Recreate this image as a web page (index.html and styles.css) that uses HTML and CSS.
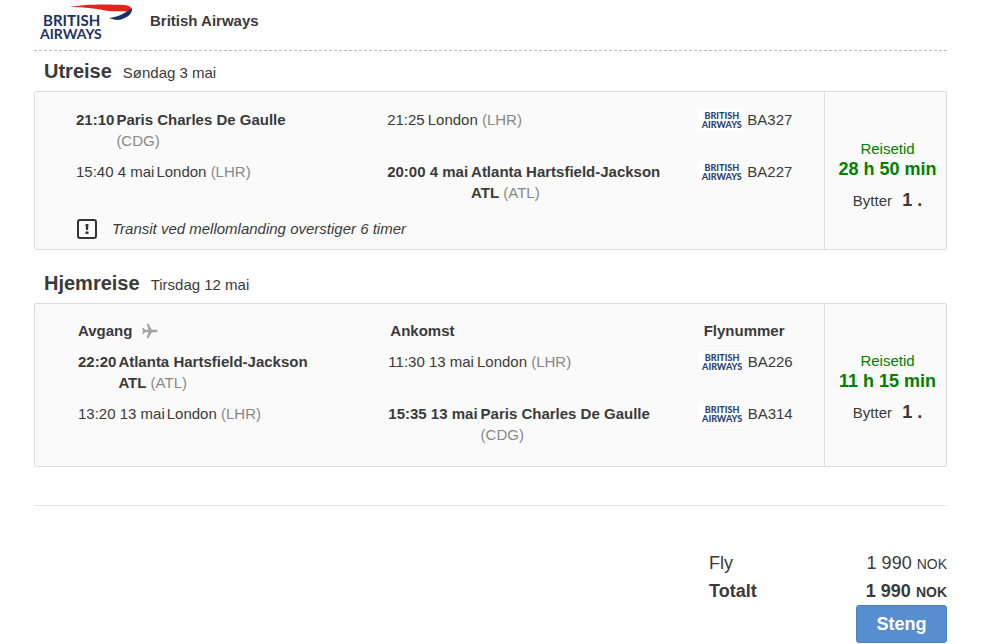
FILE: index.html
```html
<!DOCTYPE html>
<html lang="no">
	<head>
		<meta charset="UTF-8">
		<title>British Airways</title>
		<link rel="stylesheet" href="styles.css">
	</head>
	<body>
		<div class="page">
			<div class="airline">
				<svg class="logo" viewBox="0 0 96 40" role="img" aria-label="British Airways">
					<path d="M31 6 C46 3 70 3 86 4 C93 4 95 8 92 12 C87 9 79 11 70 10 C60 8 47 6 31 6z" fill="#e1251b"/>
					<path d="M71 17 C80 16 88 12 94 7 C95 13 88 18 80 19 C77 19 74 18 71 17z" fill="#1d3263"/>
					<text x="5" y="25" class="british">BRITISH</text>
					<text x="2" y="38">AIRWAYS</text>
				</svg>
				<b>British Airways</b>
			</div>

			<div class="title"><h2>Utreise</h2><span>Søndag 3 mai</span></div>
			<div class="card">
				<div class="flights">
					<table>
						<tr>
							<td><div class="stop"><b>21:10</b><span><b>Paris Charles De Gaulle</b> <i>(CDG)</i></span></div></td>
							<td><div class="stop to"><span>21:25</span><span>London <i>(LHR)</i></span></div></td>
							<td><div class="number"><div class="ba"><span>BRITISH</span><span>AIRWAYS</span></div>BA327</div></td>
						</tr>
						<tr>
							<td><div class="stop"><span>15:40 4 mai</span><span>London <i>(LHR)</i></span></div></td>
							<td><div class="stop to"><b>20:00 4 mai</b><span><b>Atlanta Hartsfield-Jackson ATL</b> <i>(ATL)</i></span></div></td>
							<td><div class="number"><div class="ba"><span>BRITISH</span><span>AIRWAYS</span></div>BA227</div></td>
						</tr>
					</table>
					<div class="note">
						<svg viewBox="0 0 20 20"><rect x="1" y="1" width="18" height="18" rx="2" fill="none" stroke="#333" stroke-width="2"/><path d="M8.500 5h3l-.5 6h-2zM8.500 12.500h3v2.500h-3z" fill="#333"/></svg>
						<em>Transit ved mellomlanding overstiger 6 timer</em>
					</div>
				</div>
				<div class="time">
					<span class="green">Reisetid</span>
					<strong class="green">28 h 50 min</strong>
					<div class="change">Bytter <strong>1 .</strong></div>
				</div>
			</div>

			<div class="title"><h2>Hjemreise</h2><span>Tirsdag 12 mai</span></div>
			<div class="card back">
				<div class="flights">
					<table>
						<tr>
							<th>Avgang <svg class="plane" viewBox="0 0 16 16"><path d="M15.500 8 C15.500 7.200 14.500 6.700 13.500 6.700 L9.800 6.700 L6.500 .8 L4.700 .8 L6.500 6.700 L3 6.700 L1.600 5 L.3 5 L1 8 L.3 11 L1.600 11 L3 9.300 L6.500 9.300 L4.700 15.200 L6.500 15.200 L9.800 9.300 L13.500 9.300 C14.500 9.300 15.500 8.800 15.500 8z" fill="#a3a3a3"/></svg></th>
							<th>Ankomst</th>
							<th>Flynummer</th>
						</tr>
						<tr>
							<td><div class="stop"><b>22:20</b><span><b>Atlanta Hartsfield-Jackson ATL</b> <i>(ATL)</i></span></div></td>
							<td><div class="stop to"><span>11:30 13 mai</span><span>London <i>(LHR)</i></span></div></td>
							<td><div class="number"><div class="ba"><span>BRITISH</span><span>AIRWAYS</span></div>BA226</div></td>
						</tr>
						<tr>
							<td><div class="stop"><span>13:20 13 mai</span><span>London <i>(LHR)</i></span></div></td>
							<td><div class="stop to"><b>15:35 13 mai</b><span><b>Paris Charles De Gaulle</b> <i>(CDG)</i></span></div></td>
							<td><div class="number"><div class="ba"><span>BRITISH</span><span>AIRWAYS</span></div>BA314</div></td>
						</tr>
					</table>
				</div>
				<div class="time">
					<span class="green">Reisetid</span>
					<strong class="green">11 h 15 min</strong>
					<div class="change">Bytter <strong>1 .</strong></div>
				</div>
			</div>

			<div class="price">
				<table>
					<tr><td>Fly</td><td>1 990 <small>NOK</small></td></tr>
					<tr class="total"><td>Totalt</td><td>1 990 <small>NOK</small></td></tr>
				</table>
				<button type="button">Steng</button>
			</div>
		</div>
	</body>
</html>
```

FILE: styles.css
```css
*{margin: 0;padding: 0;box-sizing: border-box;}
body{font: 15px/21px "Liberation Sans", Arial, sans-serif;color: #3a3a3a;background: #fff;}
table{border-collapse: collapse;width: 100%;}
.page{margin: 0 58px 0 34px;}

.airline{display: flex;align-items: center;height: 51px;padding: 0 0 9px 4px;border-bottom: 1px dashed #bbb;}
.logo{width: 96px;height: 40px;margin-right: 16px;}
.logo text{font: bold 14px Lato, sans-serif;fill: #1d3263;}
.logo .british{font-size: 15px;}

.title{display: flex;align-items: baseline;height: 40px;padding: 8px 0 0 10px;}
.title h2{font-size: 20px;line-height: 24px;margin-right: 11px;}

.card{display: flex;min-height: 159px;margin-bottom: 13px;background: #fafafa;border: 1px solid #ddd;border-radius: 2px;}
.flights{flex: 1;padding: 12px 0 10px 41px;}
.back{min-height: 164px;}
.back .flights{padding: 11px 0 10px 43px;}
.flights table{table-layout: fixed;}
.flights th{text-align: left;padding: 5px 0;}
.flights th + th{padding-left: 2px;}
.flights td{padding: 5px 0;vertical-align: top;}
.flights th:nth-child(1),.flights td:nth-child(1){width: 41.6%;}
.flights th:nth-child(2),.flights td:nth-child(2){width: 42%;}
.flights td:nth-child(1){padding-right: 80px;}
.flights td:nth-child(2){padding-right: 40px;}
.stop{display: flex;gap: 2px;}
.stop.to{gap: 3px;}
.stop > :first-child{white-space: nowrap;}
.stop i{font-style: normal;color: #888;}
.number{display: flex;align-items: center;gap: 4px;height: 21px;}
.ba{display: flex;flex-direction: column;align-items: center;width: 46px;margin-left: -4px;padding: 2px 0 2px 3px;background: #fff;font: 900 9px/9px Lato, sans-serif;color: #2c3f6e;}
.plane{width: 16px;height: 16px;margin-left: 5px;vertical-align: -3px;}
.note{display: flex;align-items: center;gap: 15px;margin-top: 10px;padding-left: 1px;}
.note svg{width: 20px;height: 20px;}

.time{width: 122px;border-left: 1px solid #ddd;display: flex;flex-direction: column;align-items: center;padding: 46px 0 0 4px;}
.time strong{font-size: 18px;}
.green{color: #008000;}
.change{margin-top: 10px;}
.change strong{margin-left: 6px;}

.price{margin-top: 38px;padding-top: 43px;border-top: 1px solid #e5e5e5;display: flex;flex-direction: column;align-items: flex-end;}
.price table{width: 238px;font-size: 18px;line-height: 28px;}
.price td:last-child{text-align: right;}
.price small{font-size: 14px;line-height: 14px;}
.total{font-weight: bold;}
button{width: 91px;height: 38px;font: bold 18px "Liberation Sans", Arial, sans-serif;color: #fff;background: #568ecf;border: 1px solid #4a80c0;border-radius: 3px;}
```
